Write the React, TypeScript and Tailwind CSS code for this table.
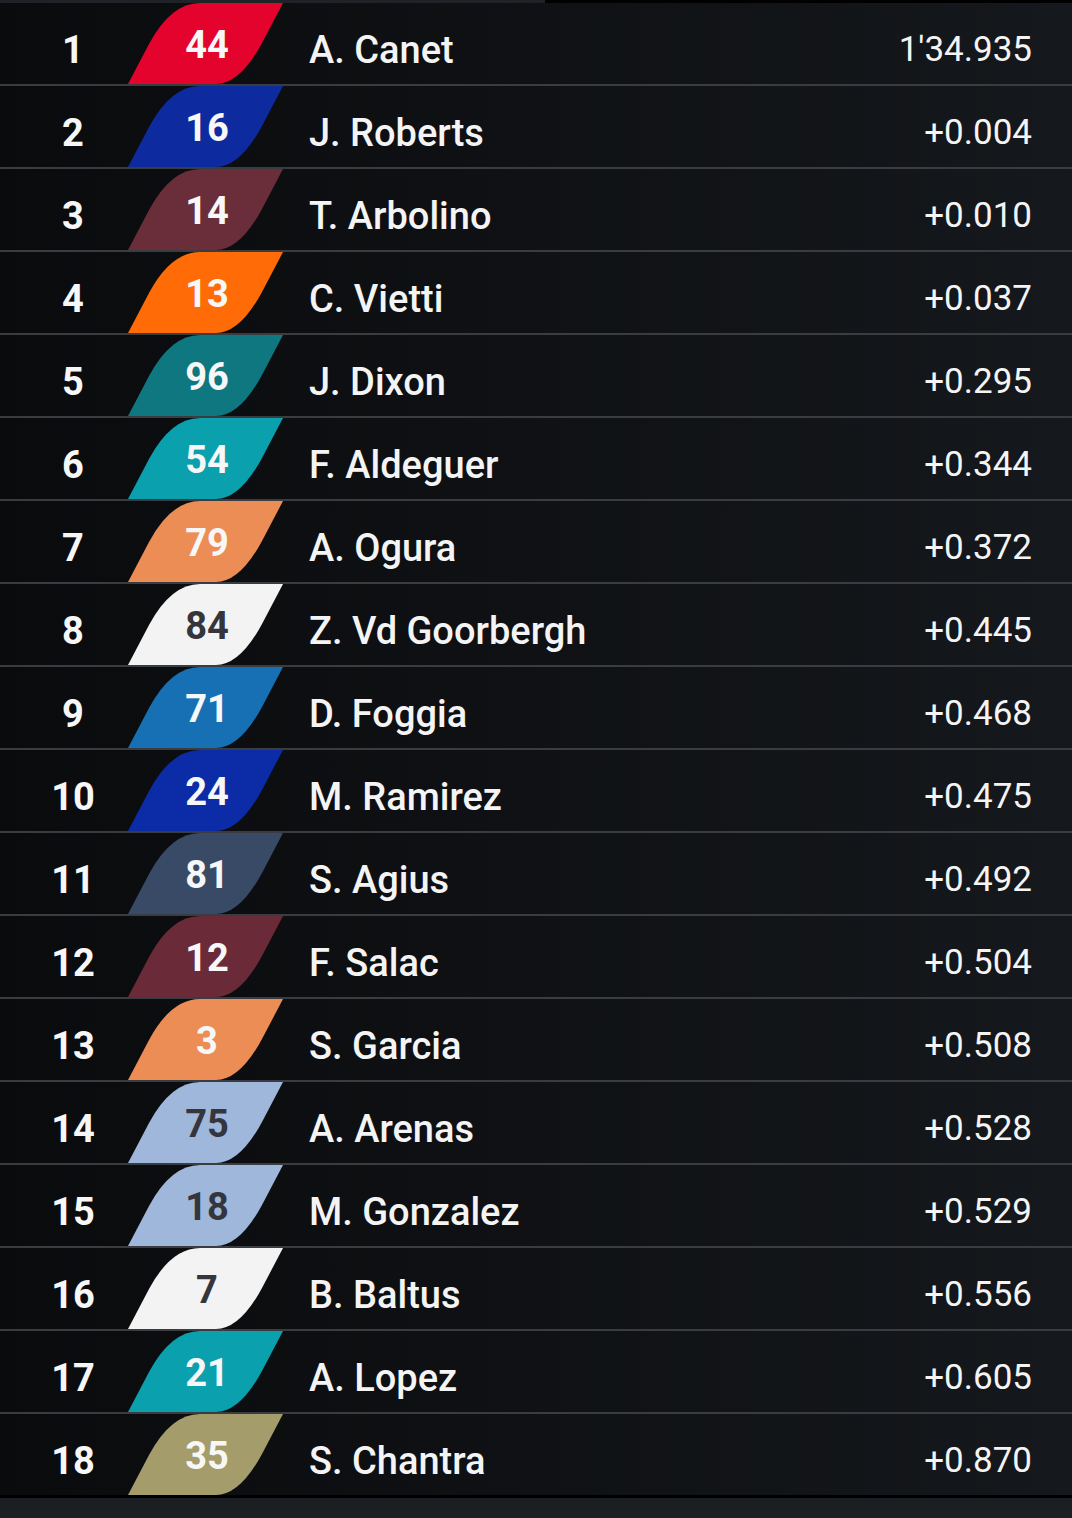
const rows: { pos: number; num: string; name: string; time: string; bg: string; dark?: boolean }[] = [
  { pos: 1, num: "44", name: "A. Canet", time: "1'34.935", bg: "#e3032d" },
  { pos: 2, num: "16", name: "J. Roberts", time: "+0.004", bg: "#0d2b9f" },
  { pos: 3, num: "14", name: "T. Arbolino", time: "+0.010", bg: "#6a2d3a" },
  { pos: 4, num: "13", name: "C. Vietti", time: "+0.037", bg: "#ff6b06" },
  { pos: 5, num: "96", name: "J. Dixon", time: "+0.295", bg: "#0e7780" },
  { pos: 6, num: "54", name: "F. Aldeguer", time: "+0.344", bg: "#0aa0ad" },
  { pos: 7, num: "79", name: "A. Ogura", time: "+0.372", bg: "#ec8d56" },
  { pos: 8, num: "84", name: "Z. Vd Goorbergh", time: "+0.445", bg: "#f3f3f3", dark: true },
  { pos: 9, num: "71", name: "D. Foggia", time: "+0.468", bg: "#1670b3" },
  { pos: 10, num: "24", name: "M. Ramirez", time: "+0.475", bg: "#0c2ba7" },
  { pos: 11, num: "81", name: "S. Agius", time: "+0.492", bg: "#384a66" },
  { pos: 12, num: "12", name: "F. Salac", time: "+0.504", bg: "#6a2a38" },
  { pos: 13, num: "3", name: "S. Garcia", time: "+0.508", bg: "#ec8d56" },
  { pos: 14, num: "75", name: "A. Arenas", time: "+0.528", bg: "#9fb7db", dark: true },
  { pos: 15, num: "18", name: "M. Gonzalez", time: "+0.529", bg: "#9fb7db", dark: true },
  { pos: 16, num: "7", name: "B. Baltus", time: "+0.556", bg: "#f3f3f3", dark: true },
  { pos: 17, num: "21", name: "A. Lopez", time: "+0.605", bg: "#0aa0ad" },
  { pos: 18, num: "35", name: "S. Chantra", time: "+0.870", bg: "#a59c6b" },
];

function Badge({ num, bg, dark }: { num: string; bg: string; dark?: boolean }) {
  return (
    <div className="relative w-[155px] h-[81px] shrink-0">
      <svg className="absolute inset-0" width="155" height="81" viewBox="0 0 155 81">
        <path d="M0 81 L21 41 Q43 0 72 0 L155 0 L134 40 Q112 81 88 81 Z" fill={bg} />
      </svg>
      <span
        className={`relative flex h-full items-center justify-center pt-[3px] pl-[3px] text-[38px] font-bold leading-none ${
          dark ? "text-[#34363b]" : "text-[#f7f7f7]"
        }`}
      >
        {num}
      </span>
    </div>
  );
}

export default function App() {
  return (
    <div className="w-[1072px] min-h-[1518px] bg-[#1b1f23] font-['Roboto',sans-serif]">
      <div className="flex h-[3px]">
        <div className="w-[545px] bg-[#1f2327]" />
        <div className="flex-1 bg-black" />
      </div>
      <div className="flex flex-col">
        {rows.map((r, i) => (
          <div
            key={r.pos}
            className={`flex items-center h-[83px] bg-linear-to-r from-[#0a0b0d] via-[#0f1114] to-[#15181c] ${
              i === rows.length - 1 ? "border-b-[3px] border-black h-[84px]" : "border-b-2 border-[#393c41]"
            }`}
          >
            <div className="w-[128px] pt-[12px] pl-[18px] text-center text-[38px] font-bold leading-none text-[#f7f7f7]">
              {r.pos}
            </div>
            <Badge num={r.num} bg={r.bg} dark={r.dark} />
            <div className="flex-1 pt-[12px] pl-[26px] text-[38px] font-medium leading-none text-[#f4f4f4]">
              {r.name}
            </div>
            <div className="pt-[12px] pr-[40px] text-[35px] leading-none text-[#f4f4f4]">{r.time}</div>
          </div>
        ))}
      </div>
    </div>
  );
}
